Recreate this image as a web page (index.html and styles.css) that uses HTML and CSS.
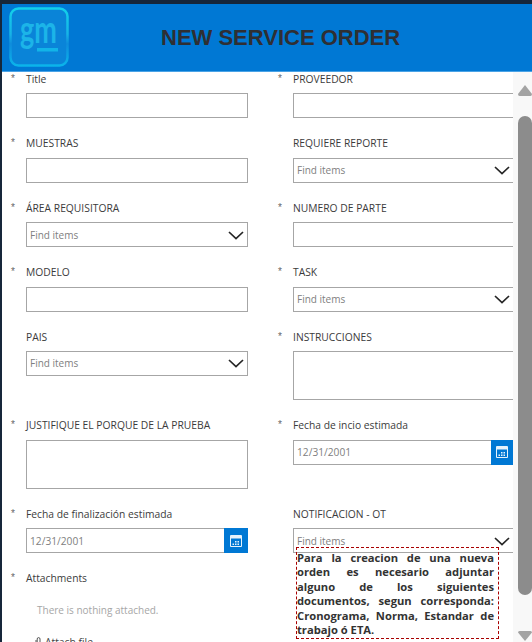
FILE: index.html
```html
<!DOCTYPE html>
<html lang="en">
<head>
<meta charset="utf-8">
<title>New Service Order</title>
<link rel="stylesheet" href="styles.css">
</head>
<body>
<div class="app">
  <header class="header">
    <svg class="logo" width="60" height="60" viewBox="0 0 60 60" aria-label="GM logo">
      <defs>
        <linearGradient id="lg" x1="0" y1="0" x2="0" y2="1">
          <stop offset="0" stop-color="#12d0ea"/>
          <stop offset="0.45" stop-color="#17b4e6"/>
          <stop offset="0.62" stop-color="#0f8ddc"/>
          <stop offset="1" stop-color="#0bb4ea"/>
        </linearGradient>
      </defs>
      <rect x="1.500" y="1.500" width="57" height="57" rx="8" fill="#0a84d8" stroke="url(#lg)" stroke-width="2.500"/>
      <text class="logo-text" transform="translate(11 36) scale(0.9 1.25)" fill="#1cb4e8">gm</text>
      <rect x="28" y="41" width="21" height="3.500" fill="#12b4e8"/>
    </svg>
    <h1 class="title">NEW SERVICE ORDER</h1>
  </header>
  <div class="body">
    <main class="form">
      <div class="field"><span class="star">*</span><label class="label">Title</label><div class="input"></div></div>
      <div class="field"><span class="star">*</span><label class="label">PROVEEDOR</label><div class="input"></div></div>

      <div class="field"><span class="star">*</span><label class="label">MUESTRAS</label><div class="input"></div></div>
      <div class="field"><label class="label">REQUIERE REPORTE</label>
        <div class="input"><span class="hint">Find items</span><svg class="chev" width="16" height="9" viewBox="0 0 16 9"><path d="M1 1l7 6.5L15 1" fill="none" stroke="#252525" stroke-width="1.7"/></svg></div></div>

      <div class="field"><span class="star">*</span><label class="label">ÁREA REQUISITORA</label>
        <div class="input"><span class="hint">Find items</span><svg class="chev" width="16" height="9" viewBox="0 0 16 9"><path d="M1 1l7 6.5L15 1" fill="none" stroke="#252525" stroke-width="1.7"/></svg></div></div>
      <div class="field"><span class="star">*</span><label class="label">NUMERO DE PARTE</label><div class="input"></div></div>

      <div class="field"><span class="star">*</span><label class="label">MODELO</label><div class="input"></div></div>
      <div class="field"><span class="star">*</span><label class="label">TASK</label>
        <div class="input"><span class="hint">Find items</span><svg class="chev" width="16" height="9" viewBox="0 0 16 9"><path d="M1 1l7 6.5L15 1" fill="none" stroke="#252525" stroke-width="1.7"/></svg></div></div>

      <div class="field"><label class="label">PAIS</label>
        <div class="input"><span class="hint">Find items</span><svg class="chev" width="16" height="9" viewBox="0 0 16 9"><path d="M1 1l7 6.5L15 1" fill="none" stroke="#252525" stroke-width="1.7"/></svg></div></div>
      <div class="field"><span class="star">*</span><label class="label">INSTRUCCIONES</label><div class="input tall"></div></div>

      <div class="field"><span class="star">*</span><label class="label">JUSTIFIQUE EL PORQUE DE LA PRUEBA</label><div class="input tall"></div></div>
      <div class="field"><span class="star">*</span><label class="label">Fecha de incio estimada</label>
        <div class="input date"><span class="hint date-text">12/31/2001</span><span class="cal"><svg width="14" height="14" viewBox="0 0 14 14"><path d="M1.5 1.5h11v11h-11z" fill="none" stroke="#e6f2fb"/><path d="M1.5 2h11v2.5h-11z" fill="#e6f2fb"/><path d="M6 7h1.5v1.5H6zM8.5 7H10v1.5H8.5zM3.5 9.5H5V11H3.500zM6 9.500h1.500V11H6zM8.500 9.500H10V11H8.500z" fill="#e6f2fb"/></svg></span></div></div>

      <div class="field"><span class="star">*</span><label class="label">Fecha de finalización estimada</label>
        <div class="input date"><span class="hint date-text">12/31/2001</span><span class="cal"><svg width="14" height="14" viewBox="0 0 14 14"><path d="M1.5 1.5h11v11h-11z" fill="none" stroke="#e6f2fb"/><path d="M1.5 2h11v2.5h-11z" fill="#e6f2fb"/><path d="M6 7h1.5v1.5H6zM8.5 7H10v1.5H8.5zM3.5 9.5H5V11H3.500zM6 9.500h1.500V11H6zM8.500 9.500H10V11H8.500z" fill="#e6f2fb"/></svg></span></div></div>
      <div class="field"><label class="label">NOTIFICACION - OT</label>
        <div class="input"><span class="hint">Find items</span><svg class="chev" width="16" height="9" viewBox="0 0 16 9"><path d="M1 1l7 6.5L15 1" fill="none" stroke="#252525" stroke-width="1.7"/></svg></div></div>

      <div class="field attach"><span class="star">*</span><label class="label">Attachments</label>
        <p class="empty">There is nothing attached.</p>
        <p class="attach-link"><svg width="8" height="12" viewBox="0 0 8 12"><path d="M2 4v5a2 2 0 0 0 4 0V3a1.400 1.400 0 0 0-2.800 0v5.500" fill="none" stroke="#444" stroke-width="0.9"/></svg>Attach file</p>
      </div>
    </main>
    <aside class="note">Para la creacion de una nueva orden es necesario adjuntar alguno de los siguientes documentos, segun corresponda: Cronograma, Norma, Estandar de trabajo ó ETA.</aside>
    <div class="scrollbar">
      <svg class="arrow" width="14" height="12" viewBox="0 0 14 12"><path d="M7 1L14 10Q14 12 12.500 12H1.500Q0 12 0 10z" fill="#a3a3a3"/></svg>
      <div class="thumb"></div>
      <svg class="arrow arrow-down" width="14" height="10" viewBox="0 0 14 10"><path d="M7 10L0 1.500Q0 0 1.500 0H12.500Q14 0 14 1.500z" fill="#a3a3a3"/></svg>
    </div>
  </div>
</div>
</body>
</html>
```
FILE: styles.css
```css
* { box-sizing: border-box; }
html, body { margin: 0; height: 642px; overflow: hidden; }
body { background: #16263a; font-family: "Open Sans", "Noto Sans", sans-serif; }
.app { margin: 4px 0 0 2px; height: 638px; display: flex; flex-direction: column; background: #fff; }
.header { height: 68px; flex: none; background: #0078d4; border-bottom: 1px solid #4aa3e6; display: flex; align-items: center; position: relative; }
.logo { position: absolute; left: 7px; top: 3px; }
.logo-text { font-family: "Lato", sans-serif; font-weight: 700; font-size: 30px; }
.title { margin: 0 0 0 159px; font-family: "Liberation Sans", Arial, sans-serif; font-weight: 700; font-size: 22px; color: #2f2f33; }
.body { flex: 1; display: flex; position: relative; overflow: hidden; min-height: 0; }
.form { flex: 1; min-width: 0; display: grid; grid-template-columns: 267px 1fr; align-content: start; overflow: hidden; }
.field { position: relative; padding: 0 0 18px 24px; display: flex; flex-direction: column; }
.field:nth-child(odd) { padding-right: 21px; }
.star { position: absolute; left: 9px; top: 1px; font-family: "Liberation Sans", sans-serif; font-size: 10px; line-height: 12px; color: #666; }
.label { display: block; height: 14.400px; line-height: 14px; margin-bottom: 7px; font-size: 10.300px; color: #3b3b3b; white-space: nowrap; }
.input { height: 25px; border: 1px solid #a6a6a6; display: flex; align-items: center; background: #fff; padding-left: 3px; position: relative; }
.tall { height: 49.200px; }
.field:nth-child(even) .input { border-right: 0; }
.hint { font-size: 10px; color: #808080; }
.date-text { font-size: 10.200px; }
.chev { margin-left: auto; margin-right: 3px; margin-top: 1px; }
.cal { margin-left: auto; width: 22px; align-self: stretch; margin-top: -1px; margin-bottom: -1px; background: #0078d4; display: flex; align-items: center; justify-content: center; }
.field:nth-child(odd) .cal { margin-right: -1px; width: 24px; }
.attach { padding-bottom: 0; }
.empty { margin: 10px 0 0 11px; font-size: 10px; line-height: 14px; color: #a6a6a6; }
.attach-link { margin: 18px 0 0 8px; font-size: 10.300px; line-height: 14px; color: #444; display: flex; align-items: center; gap: 3px; white-space: nowrap; }
.note { position: absolute; left: 294px; top: 475px; width: 203px; height: 92px; border: 1px dashed #a80000; padding: 3px 4px 0 0; font-family: "Open Sans", sans-serif; font-weight: 700; font-size: 11.200px; line-height: 14.400px; color: #333; text-align: justify; background: transparent; }
.scrollbar { width: 19px; flex: none; background: #f8f8f8; display: flex; flex-direction: column; align-items: flex-end; padding: 12px 0 1px 0; }
.arrow { flex: none; }
.thumb { flex: 1; width: 14px; margin: 20px 0 36px; border-radius: 7px; background: #8c8c8c; }
```
